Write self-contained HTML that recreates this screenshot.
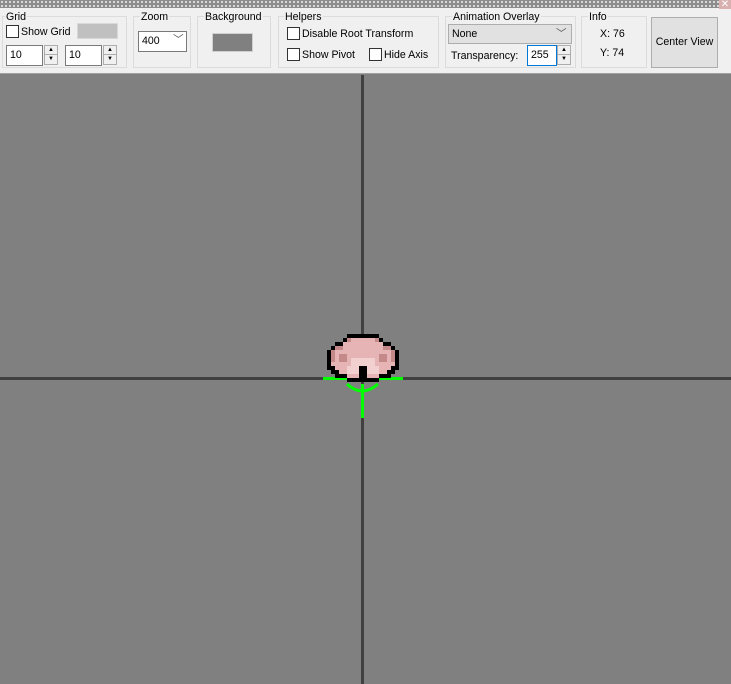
<!DOCTYPE html>
<html><head><style>
*{margin:0;padding:0;box-sizing:border-box}
body{width:731px;height:684px;overflow:hidden;background:#808080;font-family:"Liberation Sans",sans-serif;font-size:10.6px;color:#000;position:relative}
.a{position:absolute}
#tb{left:0;top:0;width:731px;height:74px;background:#f0f0f0;border-bottom:1px solid #a0a0a0}
#dots{left:0;top:0;width:719px;height:8px;background-color:#8c8c8c;background-image:linear-gradient(90deg,transparent 2px,#8c8c8c 2px),linear-gradient(#d8d8d8 2px,transparent 2px);background-size:4px 4px,4px 4px;background-position:1px 1px,1px 1px}
.g{border:1px solid #dcdcdc}
.lbl{background:#f0f0f0;padding:0 1px;line-height:12px}
.cb{width:13px;height:13px;border:1px solid #333;background:#fff}
.in{background:#fff;border:1px solid #7a7a7a;height:21px;line-height:19px;padding-left:3px}
.sp{width:14px;height:20px;border:1px solid #adadad;background:#f0f0f0}
.sp div{height:9px;border-bottom:1px solid #adadad;font-size:6px;text-align:center;line-height:9px}
.sp div+div{border:0}
</style></head><body>
<div id="tb" class="a"></div>
<div id="dots" class="a"></div>
<div class="a" style="left:719px;top:0;width:12px;height:9px;background:#d9b0b0;color:#fff;font-size:10px;line-height:9px;text-align:center">✕</div>

<div class="a g" style="left:2px;top:16px;width:125px;height:52px"></div>
<div class="a lbl" style="left:5px;top:11px">Grid</div>
<div class="a cb" style="left:6px;top:25px"></div>
<div class="a" style="left:21px;top:26px">Show Grid</div>
<div class="a" style="left:77px;top:23px;width:41px;height:16px;background:#c0c0c0;border:1px solid #d8d8d8"></div>
<div class="a in" style="left:6px;top:45px;width:37px">10</div>
<div class="a sp" style="left:44px;top:45px"><div>▲</div><div>▼</div></div>
<div class="a in" style="left:65px;top:45px;width:37px">10</div>
<div class="a sp" style="left:103px;top:45px"><div>▲</div><div>▼</div></div>

<div class="a g" style="left:133px;top:16px;width:58px;height:52px"></div>
<div class="a lbl" style="left:140px;top:11px">Zoom</div>
<div class="a in" style="left:138px;top:31px;width:49px">400<span style="position:absolute;left:34px;top:-1px;color:#555">﹀</span></div>

<div class="a g" style="left:197px;top:16px;width:74px;height:52px"></div>
<div class="a lbl" style="left:204px;top:11px">Background</div>
<div class="a" style="left:212px;top:33px;width:41px;height:19px;background:#808080;border:1px solid #d0d0d0"></div>

<div class="a g" style="left:278px;top:16px;width:161px;height:52px"></div>
<div class="a lbl" style="left:284px;top:11px">Helpers</div>
<div class="a cb" style="left:287px;top:27px"></div>
<div class="a" style="left:302px;top:28px">Disable Root Transform</div>
<div class="a cb" style="left:287px;top:48px"></div>
<div class="a" style="left:302px;top:49px">Show Pivot</div>
<div class="a cb" style="left:369px;top:48px"></div>
<div class="a" style="left:384px;top:49px">Hide Axis</div>

<div class="a g" style="left:445px;top:16px;width:131px;height:52px"></div>
<div class="a lbl" style="left:452px;top:11px">Animation Overlay</div>
<div class="a" style="left:448px;top:24px;width:124px;height:20px;background:#e1e1e1;border:1px solid #adadad;line-height:18px;padding-left:3px">None<span style="position:absolute;left:107px;top:0;color:#555">﹀</span></div>
<div class="a" style="left:451px;top:50px">Transparency:</div>
<div class="a in" style="left:527px;top:45px;width:30px;border-color:#0078d7">255</div>
<div class="a sp" style="left:557px;top:45px"><div>▲</div><div>▼</div></div>

<div class="a g" style="left:581px;top:16px;width:66px;height:52px"></div>
<div class="a lbl" style="left:588px;top:11px">Info</div>
<div class="a" style="left:600px;top:28px">X: 76</div>
<div class="a" style="left:600px;top:47px">Y: 74</div>

<div class="a" style="left:651px;top:17px;width:67px;height:51px;background:#e1e1e1;border:1px solid #adadad;text-align:center;line-height:49px">Center View</div>

<svg class="a" style="left:0;top:0" width="731" height="684" shape-rendering="crispEdges">
<rect x="361" y="75" width="3" height="609" fill="#404040"/>
<rect x="0" y="377" width="731" height="3" fill="#404040"/>
<rect x="323" y="377" width="80" height="3" fill="#00ff00"/>
<path d="M347 384 Q362 398 378 384" stroke="#00ff00" stroke-width="3" fill="none" shape-rendering="auto"/>
<rect x="361" y="384" width="3" height="34" fill="#00ff00"/>
<g transform="translate(327,334) scale(4)">
<path fill="#000" d="M5 0h8v1h-8zM4 1h1v1h-1zM13 1h1v1h-1zM2 2h2v1h-2zM14 2h2v1h-2zM1 3h1v1h-1zM16 3h1v1h-1zM0 4h1v4h-1zM17 4h1v4h-1zM0 8h2v1h-2zM16 8h2v1h-2zM1 9h2v1h-2zM15 9h2v1h-2zM2 10h3v1h-3zM13 10h3v1h-3zM5 11h8v1h-8zM8 8h2v3h-2z"/>
<path fill="#e6b4b4" d="M5 1h8v1h-8zM4 2h10v1h-10zM2 3h14v1h-14zM1 4h16v4h-16zM2 8h6v1h-6zM10 8h6v1h-6zM3 9h5v1h-5zM10 9h5v1h-5zM5 10h3v1h-3zM10 10h3v1h-3z"/>
<path fill="#c48a8a" d="M5 1h1v1h-1zM12 1h1v1h-1zM2 3h2v1h-2zM14 3h2v1h-2zM1 4h1v3h-1zM16 4h1v3h-1zM3 5h2v2h-2zM13 5h2v2h-2z"/>
<path fill="#f2d0d0" d="M6 6h6v2h-6zM5 8h3v2h-3zM10 8h3v2h-3z"/>
</g>
</svg>
</body></html>
